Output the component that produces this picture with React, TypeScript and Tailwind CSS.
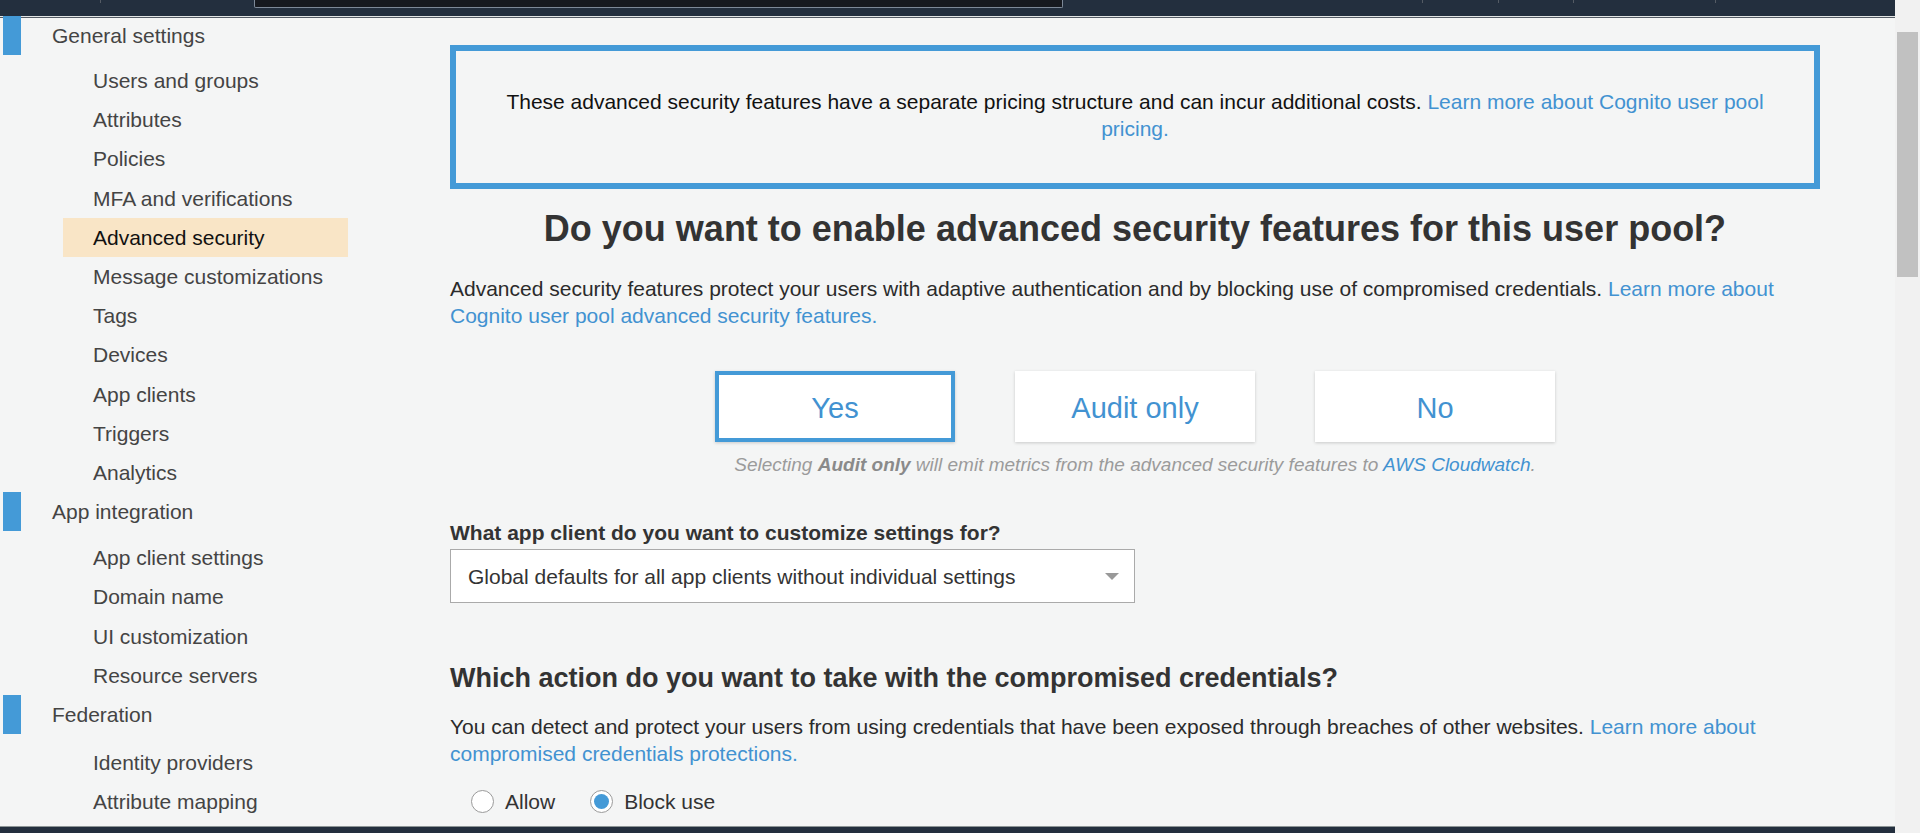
import React from "react";

type Section = { title: string; gap: string; first?: boolean; items: string[] };

const sections: Section[] = [
  {
    title: "General settings",
    gap: "mt-[6px]",
    first: true,
    items: [
      "Users and groups",
      "Attributes",
      "Policies",
      "MFA and verifications",
      "Advanced security",
      "Message customizations",
      "Tags",
      "Devices",
      "App clients",
      "Triggers",
      "Analytics",
    ],
  },
  {
    title: "App integration",
    gap: "mt-[7px]",
    items: ["App client settings", "Domain name", "UI customization", "Resource servers"],
  },
  {
    title: "Federation",
    gap: "mt-[9px]",
    items: ["Identity providers", "Attribute mapping"],
  },
];

function TopBar() {
  return (
    <div className="flex shrink-0 flex-col">
      <div className="flex h-[16px] items-start bg-[#232f3e]">
        <div className="ml-[100px] h-[3px] w-px bg-[#545b64]" />
        <div className="ml-[153px] h-[8px] w-[809px] rounded-b-[2px] border border-t-0 border-[#7d8998] bg-[#16191f]" />
        <div className="ml-[359px] h-[3px] w-px bg-[#545b64]" />
        <div className="ml-[75px] h-[3px] w-px bg-[#545b64]" />
        <div className="ml-[74px] h-[3px] w-px bg-[#545b64]" />
        <div className="ml-[141px] h-[3px] w-px bg-[#545b64]" />
      </div>
      <div className="h-px bg-[#e3e6e6]" />
      <div className="h-px bg-[#545b64]" />
    </div>
  );
}

function Sidebar() {
  return (
    <div className="w-[450px] shrink-0">
      {sections.map((s) => (
        <div key={s.title}>
          <div className={`flex h-[39px] items-center ${s.first ? "-mt-[2px]" : ""}`}>
            <div className="ml-[3px] h-full w-[18px] bg-[#449ad7]" />
            <span className="ml-[31px] text-[21px] leading-[27px] text-[#444]">{s.title}</span>
          </div>
          <div className={s.gap}>
            {s.items.map((it) => {
              const active = it === "Advanced security";
              return (
                <div
                  key={it}
                  className={`ml-[63px] flex h-[39.2px] w-[285px] items-center pl-[30px] text-[21px] leading-[27px] ${
                    active ? "bg-[#f9e5c6] text-[#111]" : "text-[#444]"
                  }`}
                >
                  {it}
                </div>
              );
            })}
          </div>
        </div>
      ))}
    </div>
  );
}

function Choice({ label, selected }: { label: string; selected?: boolean }) {
  return (
    <div
      className={`flex h-[71px] w-[240px] items-center justify-center bg-white pt-[4px] text-[29px] text-[#4292d1] shadow-[0_1px_3px_rgba(0,0,0,0.18)] ${
        selected ? "border-[4px] border-[#449ad7]" : ""
      }`}
    >
      {label}
    </div>
  );
}

function Radio({ label, checked }: { label: string; checked?: boolean }) {
  return (
    <div className="flex items-center">
      <span className="flex h-[23px] w-[23px] items-center justify-center rounded-full border border-[#9a9a9a] bg-white">
        {checked && <span className="h-[15px] w-[15px] rounded-full bg-[#449ad7]" />}
      </span>
      <span className="ml-[11px] text-[21px] leading-[27px] text-[#333]">{label}</span>
    </div>
  );
}

function Main() {
  return (
    <div className="w-[1370px] shrink-0">
      <div className="mt-[27px] border-[6px] border-[#449ad7] px-[40px] pb-[41px] pt-[37px] text-center text-[21px] leading-[27px] text-[#111]">
        These advanced security features have a separate pricing structure and can incur additional costs.{" "}
        <a className="text-[#4292d1]">Learn more about Cognito user pool pricing.</a>
      </div>

      <h1 className="mt-[20px] text-center text-[36px] font-bold leading-[40px] text-[#333]">
        Do you want to enable advanced security features for this user pool?
      </h1>

      <p className="mt-[26px] text-[21px] leading-[27px] text-[#2b2b2b]">
        Advanced security features protect your users with adaptive authentication and by blocking use of compromised
        credentials. <a className="text-[#4292d1]">Learn more about Cognito user pool advanced security features.</a>
      </p>

      <div className="mt-[42px] flex justify-center gap-[60px]">
        <Choice label="Yes" selected />
        <Choice label="Audit only" />
        <Choice label="No" />
      </div>

      <p className="mt-[9px] text-center text-[19px] italic leading-[27px] text-[#9b9b9b]">
        Selecting <span className="font-bold text-[#8a8a8a]">Audit only</span> will emit metrics from the advanced
        security features to <a className="text-[#4292d1]">AWS Cloudwatch</a>.
      </p>

      <div className="mt-[41px] text-[21px] font-bold leading-[27px] text-[#333]">
        What app client do you want to customize settings for?
      </div>

      <div className="mt-[3px] flex h-[54px] w-[685px] items-center justify-between border border-[#aaaaaa] bg-white pl-[17px] pr-[15px]">
        <span className="text-[21px] leading-[27px] text-[#333]">
          Global defaults for all app clients without individual settings
        </span>
        <svg width="14" height="7" viewBox="0 0 14 7">
          <path d="M0 0 L14 0 L7 7 Z" fill="#999" />
        </svg>
      </div>

      <h2 className="mt-[60px] text-[27px] font-bold leading-[30px] text-[#333]">
        Which action do you want to take with the compromised credentials?
      </h2>

      <p className="mt-[20px] text-[21px] leading-[27px] text-[#2b2b2b]">
        You can detect and protect your users from using credentials that have been exposed through breaches of other
        websites. <a className="text-[#4292d1]">Learn more about compromised credentials protections.</a>
      </p>

      <div className="ml-[21px] mt-[21px] flex items-center gap-[35px]">
        <Radio label="Allow" />
        <Radio label="Block use" checked />
      </div>
    </div>
  );
}

export default function App() {
  return (
    <div className="flex h-[833px] w-[1920px] overflow-hidden bg-[#f4f5f5] font-['Liberation_Sans',Arial,sans-serif]">
      <div className="relative flex w-[1895px] shrink-0 flex-col">
        <TopBar />
        <div className="flex flex-1">
          <Sidebar />
          <Main />
        </div>
        <div className="absolute bottom-0 left-0 right-0 h-[7px] border-t border-[#8d9596] bg-[#232f3e]" />
      </div>
      <div className="w-[25px] shrink-0 bg-[#f1f1f1] pl-[2px] pt-[32px]">
        <div className="h-[245px] w-[21px] bg-[#c1c1c1]" />
      </div>
    </div>
  );
}
